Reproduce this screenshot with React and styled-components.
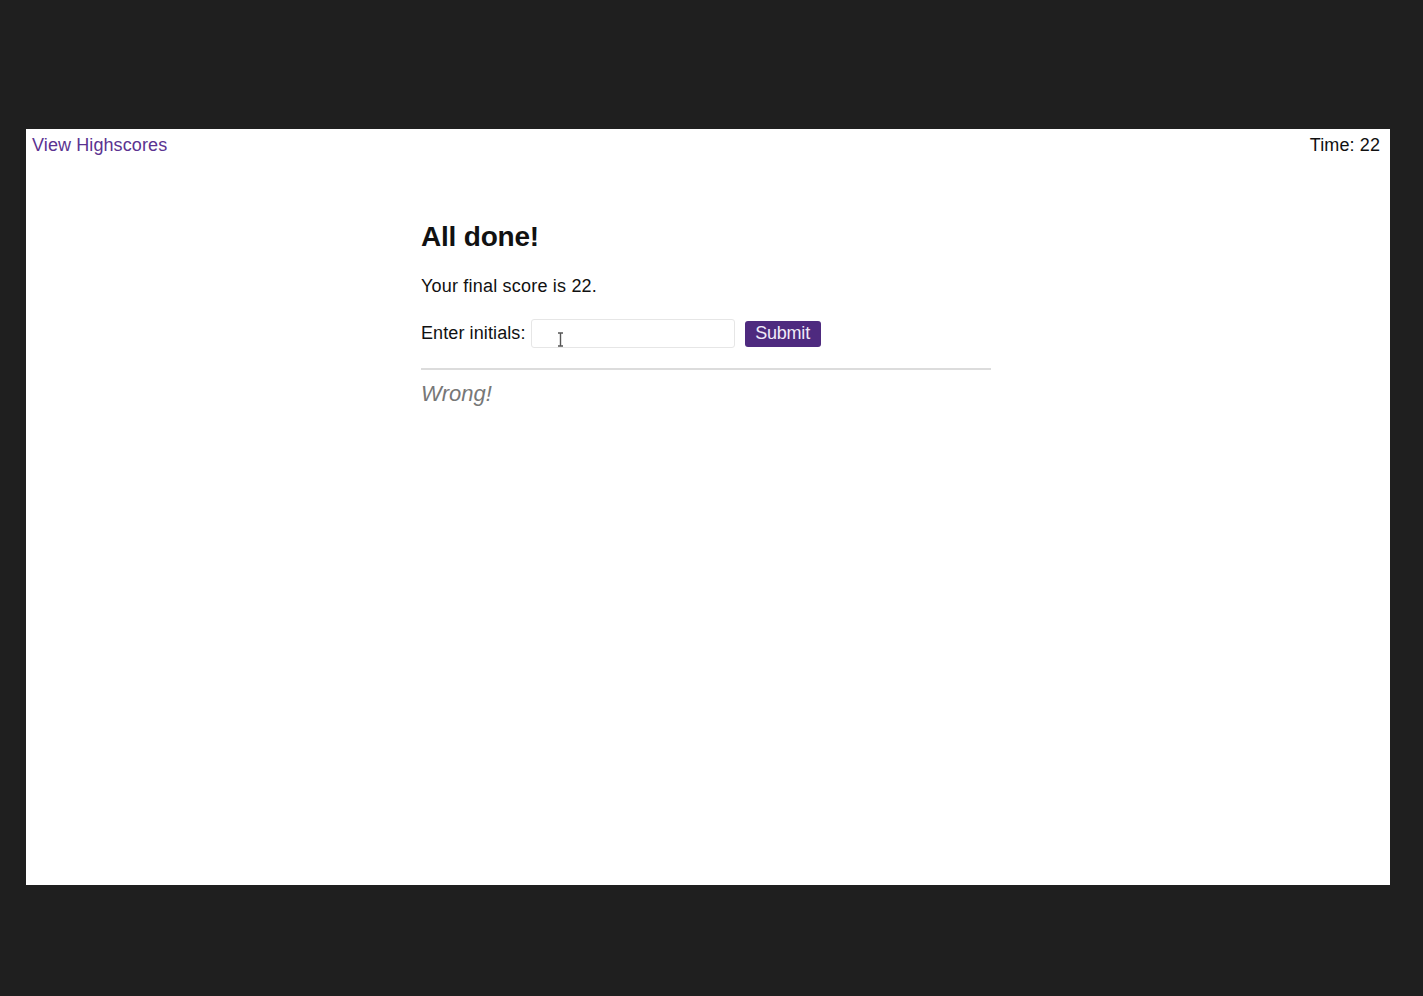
import React from "react";
import styled, { createGlobalStyle } from "styled-components";

const GlobalStyle = createGlobalStyle`
  html, body {
    margin: 0;
    padding: 0;
    background: #1f1f1f;
    font-family: "Liberation Sans", Arial, sans-serif;
  }
`;

const Stage = styled.div`
  min-height: 996px;
  padding: 129px 0 0 26px;
  box-sizing: border-box;
`;

const Panel = styled.div`
  width: 1364px;
  height: 756px;
  background: #fff;
  box-sizing: border-box;
`;

const TopBar = styled.header`
  display: flex;
  justify-content: space-between;
  align-items: center;
  padding: 6px 10px 0 6px;
  font-size: 18px;
  letter-spacing: 0.1px;
`;

const HighscoresLink = styled.a`
  color: #5b3391;
  text-decoration: none;
`;

const Timer = styled.span`
  color: #111;
`;

const Content = styled.main`
  width: 570px;
  margin: 65px 0 0 395px;
  color: #111;
`;

const Heading = styled.h1`
  font-size: 28px;
  font-weight: bold;
  margin: 0 0 23px;
  letter-spacing: -0.2px;
`;

const Score = styled.p`
  font-size: 18px;
  margin: 0 0 22px;
  letter-spacing: 0.2px;
`;

const Form = styled.form`
  display: flex;
  align-items: center;
  font-size: 18px;
`;

const Label = styled.label`
  margin-right: 5px;
  letter-spacing: 0.1px;
`;

const InputWrap = styled.div`
  position: relative;
  margin-right: 10px;
`;

const Input = styled.input`
  width: 204px;
  height: 29px;
  box-sizing: border-box;
  border: 1px solid #e6e6e6;
  border-radius: 3px;
  background: #fff;
  font-size: 16px;
  outline: none;
`;

const Cursor = styled.svg`
  position: absolute;
  left: 26px;
  top: 13px;
  pointer-events: none;
`;

const SubmitButton = styled.button`
  height: 26px;
  width: 76px;
  border: none;
  border-radius: 3px;
  background: #4e2a7f;
  color: #f0eaf8;
  font-family: inherit;
  font-size: 18px;
  letter-spacing: -0.2px;
  padding: 0;
`;

const Divider = styled.hr`
  border: none;
  border-top: 2px solid #dcdcdc;
  margin: 20px 0 11px;
`;

const Feedback = styled.p`
  font-size: 22px;
  font-style: italic;
  color: #777;
  margin: 0;
`;

export default function App() {
  return (
    <>
      <GlobalStyle />
      <Stage>
        <Panel>
          <TopBar>
            <HighscoresLink href="#">View Highscores</HighscoresLink>
            <Timer>Time: 22</Timer>
          </TopBar>
          <Content>
            <Heading>All done!</Heading>
            <Score>Your final score is 22.</Score>
            <Form onSubmit={(e) => e.preventDefault()}>
              <Label>Enter initials:</Label>
              <InputWrap>
                <Input type="text" />
                <Cursor width="7" height="15" viewBox="0 0 7 15">
                  <path
                    d="M1 1h5M1 14h5M3.5 1v13"
                    stroke="#555"
                    strokeWidth="1.4"
                    fill="none"
                  />
                </Cursor>
              </InputWrap>
              <SubmitButton type="submit">Submit</SubmitButton>
            </Form>
            <Divider />
            <Feedback>Wrong!</Feedback>
          </Content>
        </Panel>
      </Stage>
    </>
  );
}
